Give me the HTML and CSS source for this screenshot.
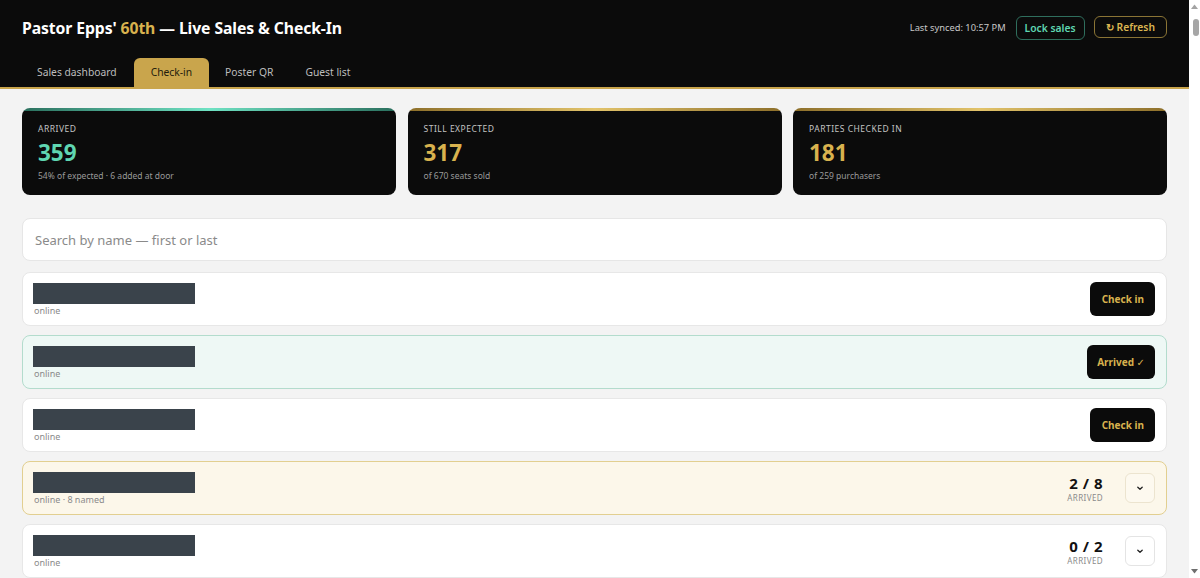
FILE: index.html
```html
<!DOCTYPE html>
<html lang="en">
<head>
<meta charset="utf-8">
<title>Pastor Epps' 60th — Live Sales &amp; Check-In</title>
<link rel="stylesheet" href="styles.css">
</head>
<body>
<div class="app">
  <div class="page">
    <header class="topbar">
      <div class="topbar-row">
        <h1 class="title">Pastor Epps' <span class="gold">60th</span> — Live Sales &amp; Check-In</h1>
        <div class="actions">
          <span class="synced">Last synced: 10:57 PM</span>
          <button class="btn-outline btn-teal">Lock sales</button>
          <button class="btn-outline btn-gold"><span class="ico">&#x21bb;</span>Refresh</button>
        </div>
      </div>
      <nav class="tabs">
        <a class="tab">Sales dashboard</a>
        <a class="tab active">Check-in</a>
        <a class="tab">Poster QR</a>
        <a class="tab">Guest list</a>
      </nav>
    </header>
    <main class="main">
      <section class="stats">
        <div class="stat stat-teal">
          <div class="stat-label">Arrived</div>
          <div class="stat-num teal">359</div>
          <div class="stat-sub">54% of expected · 6 added at door</div>
        </div>
        <div class="stat stat-gold">
          <div class="stat-label">Still expected</div>
          <div class="stat-num goldn">317</div>
          <div class="stat-sub">of 670 seats sold</div>
        </div>
        <div class="stat stat-gold">
          <div class="stat-label">Parties checked in</div>
          <div class="stat-num goldn">181</div>
          <div class="stat-sub">of 259 purchasers</div>
        </div>
      </section>
      <input class="search" type="text" placeholder="Search by name — first or last">
      <div class="list">
        <div class="row">
          <div class="who"><div class="redact"></div><div class="meta">online</div></div>
          <button class="btn-dark">Check in</button>
        </div>
        <div class="row arrived">
          <div class="who"><div class="redact"></div><div class="meta">online</div></div>
          <button class="btn-dark btn-arrived">Arrived <span class="tick">✓</span></button>
        </div>
        <div class="row">
          <div class="who"><div class="redact"></div><div class="meta">online</div></div>
          <button class="btn-dark">Check in</button>
        </div>
        <div class="row party">
          <div class="who"><div class="redact"></div><div class="meta">online · 8 named</div></div>
          <div class="side">
            <div class="count"><div class="count-num">2 / 8</div><div class="count-lbl">ARRIVED</div></div>
            <button class="chev"><svg width="10" height="10" viewBox="0 0 10 10"><path d="M2.8 4.2 L5 6.3 L7.2 4.2" fill="none" stroke="#222" stroke-width="1.3" stroke-linecap="round" stroke-linejoin="round"/></svg></button>
          </div>
        </div>
        <div class="row">
          <div class="who"><div class="redact"></div><div class="meta">online</div></div>
          <div class="side">
            <div class="count"><div class="count-num">0 / 2</div><div class="count-lbl">ARRIVED</div></div>
            <button class="chev"><svg width="10" height="10" viewBox="0 0 10 10"><path d="M2.8 4.2 L5 6.3 L7.2 4.2" fill="none" stroke="#222" stroke-width="1.3" stroke-linecap="round" stroke-linejoin="round"/></svg></button>
          </div>
        </div>
      </div>
    </main>
  </div>
  <div class="vscroll">
    <svg class="arrow" width="11" height="12" viewBox="0 0 11 12"><polygon points="2,9 9,9 5.5,4.5" fill="#a3a3a3"/></svg>
    <div class="thumb"></div>
    <div class="track"></div>
    <svg class="arrow" width="11" height="12" viewBox="0 0 11 12"><polygon points="2,3 9,3 5.5,7.5" fill="#6e6e6e"/></svg>
  </div>
</div>
</body>
</html>
```

FILE: styles.css
```css
* { box-sizing: border-box; }
html, body { margin: 0; padding: 0; overflow: hidden; }
body {
  background: #f3f3f3;
  font-family: "Noto Sans", "Open Sans", sans-serif;
  color: #111;
}
.app { display: flex; height: 578px; overflow: hidden; }
.page { flex: 1; min-width: 0; overflow: hidden; }
.vscroll {
  width: 11px;
  background: #fff;
  display: flex;
  flex-direction: column;
  align-items: center;
}
.arrow { display: block; flex: none; }
.thumb { width: 6px; height: 17px; margin-top: 7px; margin-left: 2px; background: #a6a6a6; border-radius: 3px; flex: none; }
.track { flex: 1; }

.topbar {
  background: #0b0b0b;
  border-bottom: 2px solid #c9a54c;
  padding: 0 22px;
}
.topbar-row {
  display: flex;
  align-items: center;
  justify-content: space-between;
  height: 58px;
  padding-bottom: 3px;
}
.title {
  margin: 0;
  font-size: 15.75px;
  font-weight: 700;
  color: #fff;
  letter-spacing: -0.1px;
}
.gold { color: #d8b24e; }
.actions { display: flex; align-items: center; gap: 9px; }
.synced { color: #c8c8c8; font-size: 9.3px; margin-right: 1px; }
.btn-outline {
  font-family: inherit;
  background: transparent;
  border-radius: 6px;
  font-size: 10.3px;
  font-weight: 600;
  height: 24px;
  padding: 0 10px;
  cursor: pointer;
}
.btn-teal { border: 1px solid #2f6e5d; color: #5fd6b1; padding: 0 8px; }
.btn-gold { border: 1px solid #8a7435; color: #dbb652; height: 22px; margin-top: -2px; padding: 0 11px 0 11px; }
.ico { font-weight: 700; margin-right: 3px; }
.tabs { display: flex; height: 29px; align-items: flex-end; }
.tab {
  font-size: 10.3px;
  color: #bdbdbd;
  padding: 0 16px;
  height: 29px;
  line-height: 29px;
  border-radius: 6px 6px 0 0;
}
.tab:first-child { padding-left: 15px; padding-right: 17px; }
.tab.active { background: #c9a54c; color: #231c0c; padding: 0 17px; }

.main { padding: 19px 22px 0; }
.stats { display: grid; grid-template-columns: 1fr 1fr 1fr; gap: 11.5px; }
.stat {
  border-radius: 8px;
  padding: 15px 16px 13px;
  height: 87px;
}
.stat-teal { background: linear-gradient(90deg, #2a6f5d, #6fe2c3 50%, #2a6f5d) top / 100% 3px no-repeat, #0b0b0b; }
.stat-gold { background: linear-gradient(90deg, #8d6f2a, #e2c36a 50%, #8d6f2a) top / 100% 3px no-repeat, #0b0b0b; }
.stat-label { font-size: 8.5px; letter-spacing: 0.5px; text-transform: uppercase; color: #c4c4c4; line-height: 12px; }
.stat-num { font-size: 22.5px; font-weight: 700; line-height: 26px; margin-top: 5px; }
.teal { color: #5fd6b1; }
.goldn { color: #d8b24e; }
.stat-sub { font-size: 8.5px; color: #9a9a9a; line-height: 12px; margin-top: 4px; }

.search {
  display: block;
  width: 100%;
  margin-top: 23px;
  height: 43px;
  border: 1px solid #e6e6e6;
  border-radius: 8px;
  background: #fff;
  font-family: inherit;
  font-size: 13px;
  padding: 0 12px;
  outline: none;
}
.search::placeholder { color: #8a8a8a; }

.list { display: flex; flex-direction: column; gap: 9px; margin-top: 11px; }
.row {
  display: flex;
  align-items: center;
  justify-content: space-between;
  height: 54px;
  flex: none;
  padding: 0 11px 0 10px;
  background: #fff;
  border: 1px solid #e7e7e7;
  border-radius: 8px;
}
.row.arrived { background: #eef8f5; border-color: #b3dccd; }
.row.party { background: #fcf7ea; border-color: #e2cf90; }
.who { display: flex; flex-direction: column; padding-top: 1px; }
.redact { width: 162px; height: 21px; background: #3a434b; }
.meta { font-size: 9px; color: #8a8a8a; margin-top: 1px; line-height: 12px; padding-left: 1px; }
.btn-dark {
  font-family: inherit;
  background: #0b0b0b;
  color: #d8b24e;
  border: none;
  border-radius: 6px;
  height: 34px;
  padding: 0 11px 0 12px;
  font-size: 10px;
  font-weight: 700;
}
.btn-arrived { padding: 0 10px; }
.tick { font-family: "DejaVu Sans", sans-serif; font-size: 10px; }
.side { display: flex; align-items: center; gap: 22px; }
.count { text-align: right; }
.count-num { font-size: 15px; font-weight: 700; line-height: 18px; letter-spacing: 0.5px; }
.count-lbl { font-size: 8px; color: #8a8a8a; letter-spacing: 0.4px; line-height: 11px; }
.chev {
  width: 30px; height: 30px;
  border: 1px solid #e4e4e4;
  border-radius: 6px;
  background: #fff;
  display: flex; align-items: center; justify-content: center;
  padding: 0;
}
.row.party .chev { background: #fdf9ef; border-color: #ece4cf; }
```
